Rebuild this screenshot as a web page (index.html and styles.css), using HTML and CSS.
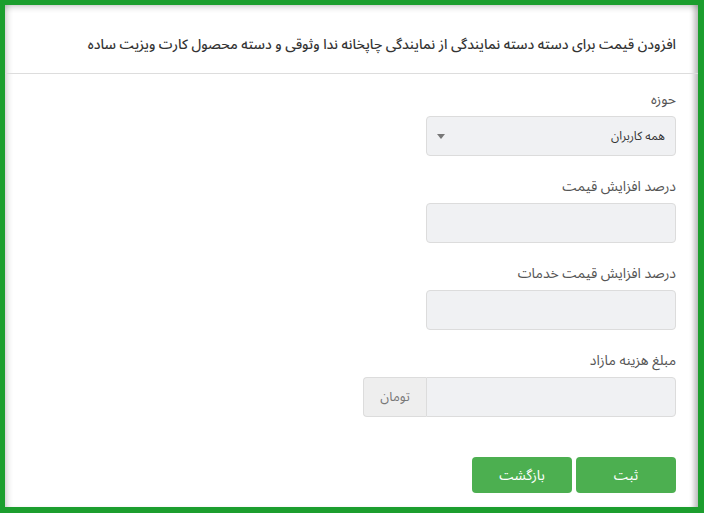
FILE: index.html
```html
<!DOCTYPE html>
<html lang="fa" dir="rtl">
  <head>
    <meta charset="utf-8">
    <title>افزودن قیمت</title>
    <link rel="stylesheet" href="styles.css">
  </head>
  <body>
    <div class="frame">
      <div class="panel">
        <div class="panel-heading">افزودن قیمت برای دسته دسته نمایندگی از نمایندگی چاپخانه ندا وثوقی و دسته محصول کارت ویزیت ساده</div>
        <form class="panel-body">
          <div class="field">
            <label>حوزه</label>
            <div class="select">
              <span>همه کاربران</span>
              <span class="caret"></span>
            </div>
          </div>
          <div class="field">
            <label>درصد افزایش قیمت</label>
            <input type="text" class="control">
          </div>
          <div class="field">
            <label>درصد افزایش قیمت خدمات</label>
            <input type="text" class="control">
          </div>
          <div class="field last">
            <label>مبلغ هزینه مازاد</label>
            <div class="input-group">
              <input type="text" class="control">
              <span class="addon">تومان</span>
            </div>
          </div>
          <div class="actions">
            <button type="button" class="btn">ثبت</button>
            <button type="button" class="btn">بازگشت</button>
          </div>
        </form>
      </div>
    </div>
  </body>
</html>
```
FILE: styles.css
```css
* {
  box-sizing: border-box;
}
html, body {
  margin: 0;
  padding: 0;
  background: #fff;
  font-family: 'Noto Sans Arabic', 'Noto Naskh Arabic', 'DejaVu Sans', sans-serif;
  color: #555;
}
.frame {
  width: 704px;
  height: 513px;
  border: 5px solid #1c9e2e;
  border-right-width: 6px;
  border-bottom-width: 6px;
  overflow: hidden;
}
.panel {
  height: 100%;
  background: #fff;
  box-shadow: inset 0 6px 6px -4px rgba(0, 0, 0, .2),
              inset 6px 0 6px -4px rgba(0, 0, 0, .2),
              inset -8px 0 5px -4px rgba(0, 0, 0, .25);
}
.panel-heading {
  padding: 30px 22px 18px 0;
  border-bottom: 1px solid #ddd;
  font-size: 13.8px;
  font-weight: 500;
  line-height: 20px;
  color: #333;
  white-space: nowrap;
}
.panel-body {
  padding: 16px 22px 0 0;
}
.field {
  margin-bottom: 21px;
}
.field.last {
  margin-bottom: 40px;
}
label {
  display: block;
  font-size: 14px;
  line-height: 20px;
  margin-bottom: 6px;
  color: #555;
}
.control, .select {
  display: block;
  width: 250px;
  height: 40px;
  background: #f0f1f3;
  border: 1px solid #dcdcdc;
  border-radius: 4px;
  font: inherit;
}
.select {
  display: flex;
  align-items: center;
  justify-content: space-between;
  padding: 0 10px 0 10px;
  font-size: 12px;
  color: #333;
}
.caret {
  width: 0;
  height: 0;
  border-left: 4px solid transparent;
  border-right: 4px solid transparent;
  border-top: 5px solid #777;
}
.input-group {
  display: flex;
}
.input-group .control {
  border-radius: 0 4px 4px 0;
}
.addon {
  width: 63px;
  height: 40px;
  display: flex;
  align-items: center;
  justify-content: center;
  background: #eee;
  border: 1px solid #dcdcdc;
  border-right: 0;
  border-radius: 4px 0 0 4px;
  font-size: 13px;
  color: #777;
}
.actions {
  display: flex;
  gap: 4px;
}
.btn {
  width: 100px;
  height: 36px;
  background: #4caf50;
  border: 0;
  border-radius: 4px;
  color: #fff;
  font: inherit;
  font-size: 14px;
}
```
